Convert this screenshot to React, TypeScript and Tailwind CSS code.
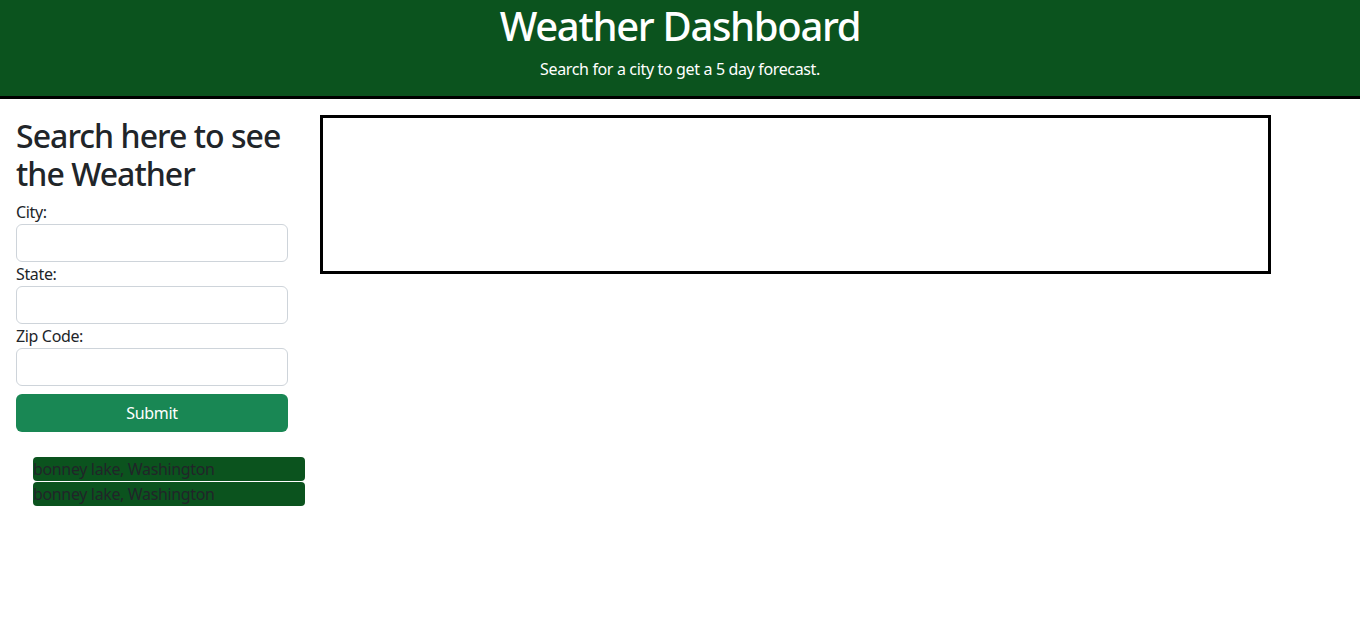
import { useState } from "react";

const font = "font-['Noto_Sans',sans-serif]";

const Field = ({ label }: { label: string }) => {
  const [value, setValue] = useState("");
  return (
    <>
      <label className="block text-[16px] leading-[24px] tracking-[-0.022em] text-[#212529]">{label}</label>
      <input
        value={value}
        onChange={(e) => setValue(e.target.value)}
        className="block h-[38px] w-full rounded-[6px] border border-[#ced4da] bg-white px-3 text-[16px] outline-none"
      />
    </>
  );
};

export default function App() {
  const history = ["bonney lake, Washington", "bonney lake, Washington"];

  return (
    <div className={`${font} min-h-screen bg-white text-[#212529]`}>
      <header className="flex h-[99px] flex-col items-center border-b-[3px] border-black bg-[#0b531e] pt-[2px] text-white">
        <h1 className="text-[40px] font-medium leading-[48px] tracking-[-0.033em]">Weather Dashboard</h1>
        <p className="mt-[7px] text-[16px] leading-[24px] tracking-[-0.022em]">Search for a city to get a 5 day forecast.</p>
      </header>

      <main className="flex items-start">
        <aside className="ml-[16px] w-[272px] pt-[17px]">
          <h2 className="mb-[7px] mt-[1px] text-[32px] font-medium leading-[38px] tracking-[-0.03em]">
            Search here to see the Weather
          </h2>
          <form onSubmit={(e) => e.preventDefault()} className="flex flex-col">
            <Field label="City:" />
            <Field label="State:" />
            <Field label="Zip Code:" />
            <button
              type="submit"
              className="mt-[8px] h-[38px] w-full rounded-[6px] bg-[#198754] text-[16px] tracking-[-0.022em] text-white"
            >
              Submit
            </button>
          </form>
          <ul className="mt-[25px] ml-[17px] flex flex-col gap-[1px]">
            {history.map((city, i) => (
              <li key={i}>
                <button className="block h-[24px] w-[272px] rounded-[4px] bg-[#0b531e] text-left text-[16px] leading-[24px] tracking-[-0.022em] text-[#212529]">
                  {city}
                </button>
              </li>
            ))}
          </ul>
        </aside>

        <section className="ml-[32px] mt-[16px] h-[159px] w-[951px] border-[3px] border-black" />
      </main>
    </div>
  );
}
